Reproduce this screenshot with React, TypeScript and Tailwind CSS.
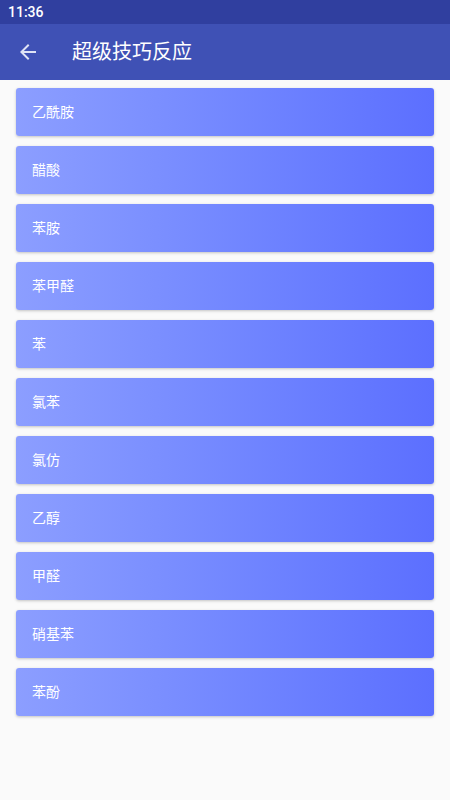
import React from "react";

const items = ["乙酰胺", "醋酸", "苯胺", "苯甲醛", "苯", "氯苯", "氯仿", "乙醇", "甲醛", "硝基苯", "苯酚"];

export default function App() {
  return (
    <div
      className="w-[450px] h-[800px] bg-[#fafafa] flex flex-col overflow-hidden"
      style={{ fontFamily: 'Roboto, "Noto Sans CJK SC", sans-serif' }}
    >
      <div className="h-[24px] bg-[#303f9f] flex items-center px-[8px] text-white text-[14px] font-medium">
        11:36
      </div>
      <div className="h-[56px] bg-[#3f51b5] flex items-center">
        <div className="w-[72px] h-[56px] flex items-center pl-[16px]">
          <svg width="24" height="24" viewBox="0 0 24 24" fill="#dfe3f5">
            <path d="M20 11H7.83l5.59-5.59L12 4l-8 8 8 8 1.41-1.41L7.83 13H20v-2z" />
          </svg>
        </div>
        <div className="text-white text-[20px] leading-none">超级技巧反应</div>
      </div>
      <div className="flex flex-col gap-[10px] px-[16px] pt-[8px]">
        {items.map((t) => (
          <div
            key={t}
            className="h-[48px] rounded-[3px] bg-gradient-to-r from-[#8c9eff] to-[#5c6fff] flex items-center pl-[16px] text-white text-[14px] shadow-[0_1px_3px_rgba(0,0,0,0.22)]"
          >
            {t}
          </div>
        ))}
      </div>
    </div>
  );
}
